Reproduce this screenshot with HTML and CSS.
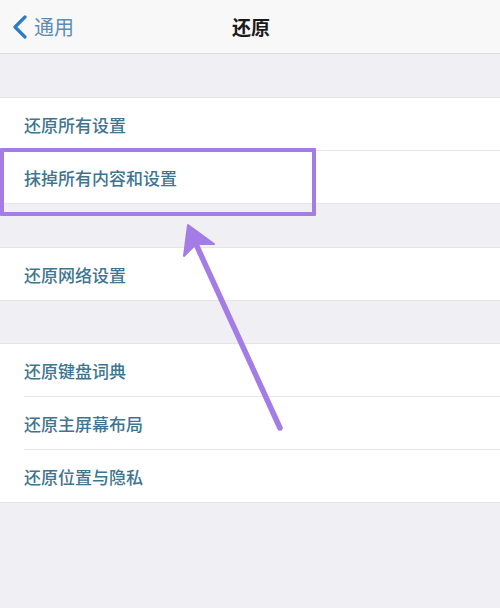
FILE: index.html
```html
<!DOCTYPE html>
<html lang="zh">
<head>
<meta charset="utf-8">
<link rel="stylesheet" href="styles.css">
</head>
<body>
<div class="screen">
  <header class="nav">
    <div class="back">
      <svg class="chev" width="16" height="24" viewBox="0 0 16 24"><path d="M13 2 L3 12 L13 22" fill="none" stroke="#2d7bc4" stroke-width="3.2" stroke-linecap="round" stroke-linejoin="round"/></svg>
      <span>通用</span>
    </div>
    <div class="title">还原</div>
  </header>
  <section class="group g1">
    <div class="row">还原所有设置</div>
    <div class="row">抹掉所有内容和设置</div>
  </section>
  <section class="group g2">
    <div class="row">还原网络设置</div>
  </section>
  <section class="group g3">
    <div class="row">还原键盘词典</div>
    <div class="row">还原主屏幕布局</div>
    <div class="row">还原位置与隐私</div>
  </section>
  <div class="highlight"></div>
  <svg class="arrow" width="500" height="608" viewBox="0 0 500 608">
    <path d="M280 428 L190 231" fill="none" stroke="#a47ce6" stroke-width="5.5" stroke-linecap="round"/>
    <path d="M188 225 L184 256 L196 244 L214 244 Z" fill="#a47ce6" stroke="#a47ce6" stroke-width="2" stroke-linejoin="round"/>
  </svg>
</div>
</body>
</html>
```
FILE: styles.css
```css
html, body {
  margin: 0;
  padding: 0;
}
body {
  background: #efeff4;
  font-family: "Noto Sans CJK SC", "Noto Sans", sans-serif;
}
.screen {
  position: relative;
  width: 500px;
  height: 608px;
  overflow: hidden;
  background: #efeff4;
}
.nav {
  position: relative;
  height: 53px;
  background: #f8f8f8;
  border-bottom: 1px solid #dcdce0;
  display: flex;
  align-items: center;
  justify-content: center;
}
.back {
  position: absolute;
  left: 12px;
  top: 0;
  height: 53px;
  display: flex;
  align-items: center;
  gap: 6px;
  color: #5b8db5;
  font-size: 20px;
}
.chev {
  display: block;
}
.title {
  font-size: 19px;
  font-weight: 700;
  color: #1a1a1a;
  margin-left: 2px;
}
.group {
  background: #fff;
  border-top: 1px solid #e4e4e9;
  border-bottom: 1px solid #e4e4e9;
}
.g1 {
  margin-top: 43px;
}
.g2 {
  margin-top: 43px;
}
.g3 {
  margin-top: 42px;
}
.row {
  height: 52px;
  margin-left: 24px;
  display: flex;
  align-items: center;
  font-size: 17px;
  color: #40758f;
  font-weight: 500;
  border-bottom: 1px solid #e6e6ea;
}
.row:last-child {
  border-bottom: none;
}
.highlight {
  position: absolute;
  left: 0;
  top: 148px;
  width: 308px;
  height: 60px;
  border: 4.5px solid #a47ce6;
  border-radius: 1px;
}
.arrow {
  position: absolute;
  left: 0;
  top: 0;
  pointer-events: none;
}
```
